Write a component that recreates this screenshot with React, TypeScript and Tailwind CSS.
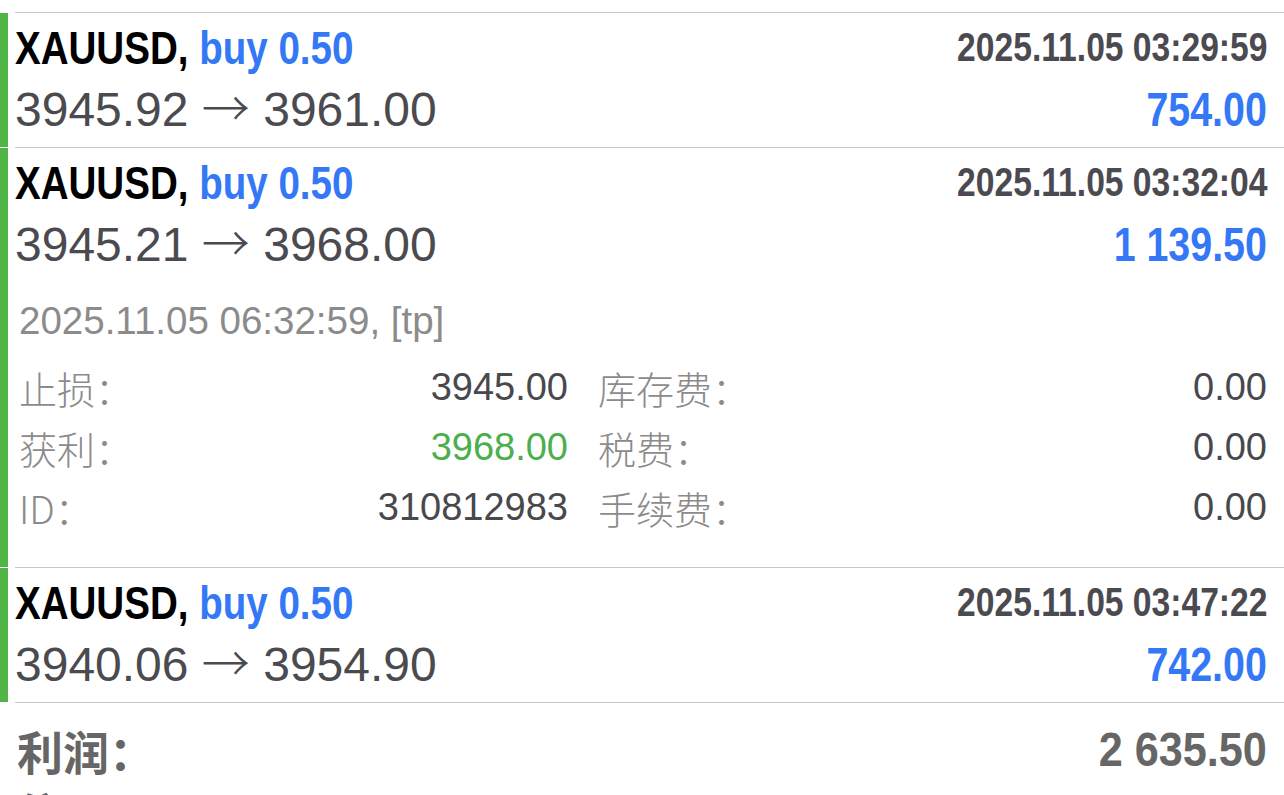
import React from 'react';

// iOS-style condensed bold: Liberation Sans Bold squeezed horizontally
const condensed = "inline-block font-['Liberation_Sans',sans-serif] font-bold scale-x-[0.82]";
const regular = "font-['Liberation_Sans','Noto_Sans_CJK_SC',sans-serif]";
const cjk = "font-['Noto_Sans_CJK_SC','Liberation_Sans',sans-serif]";

interface Deal {
  symbol: string;
  side: string;
  open: string;
  close: string;
  time: string;
  profit: string;
  expanded?: boolean;
}

const deals: Deal[] = [
  { symbol: 'XAUUSD,', side: 'buy 0.50', open: '3945.92', close: '3961.00', time: '2025.11.05 03:29:59', profit: '754.00' },
  { symbol: 'XAUUSD,', side: 'buy 0.50', open: '3945.21', close: '3968.00', time: '2025.11.05 03:32:04', profit: '1 139.50', expanded: true },
  { symbol: 'XAUUSD,', side: 'buy 0.50', open: '3940.06', close: '3954.90', time: '2025.11.05 03:47:22', profit: '742.00' },
];

const DetailCell = ({ label, value, valueClass }: { label: string; value: string; valueClass?: string }) => (
  <div className="flex h-[60px] items-center justify-between pb-[3px]">
    <span className={`${cjk} text-[38px] font-light text-[#8b8b8b]`}>{label}</span>
    <span className={`${regular} text-[38px] ${valueClass ?? 'text-[#48484d]'}`}>{value}</span>
  </div>
);

const DealRow = ({ deal }: { deal: Deal }) => (
  <div className="flex">
    {/* green stripe on the left */}
    <div className="w-[8px] shrink-0 border-b border-white bg-[#50b545]" />
    <div className="ml-[7px] flex-1 border-b border-[#c8c8cc] pr-[17px]">
      <div className={deal.expanded ? 'pt-[6px]' : 'pt-[6px] pb-[9px]'}>
        <div className="flex h-[56px] items-center justify-between">
          <div className="text-[47px] leading-none">
            <span className={`${condensed} origin-left`}>
              <span className="text-black">{deal.symbol}</span>{' '}
              <span className="text-[#3478f6]">{deal.side}</span>
            </span>
          </div>
          <div className={`${condensed} origin-right text-[41px] leading-none text-[#4a4a50]`}>{deal.time}</div>
        </div>
        <div className="mt-[7px] flex h-[56px] items-center justify-between">
          <div className={`${regular} pb-[5px] text-[48px] leading-none text-[#4a4a4f]`}>
            {deal.open} <span className="font-['Noto_Sans_CJK_SC'] font-light">→</span> {deal.close}
          </div>
          <div className={`${condensed} origin-right text-[48px] leading-none text-[#3478f6]`}>{deal.profit}</div>
        </div>
      </div>

      {deal.expanded && (
        <div className="pl-[4px] pt-[24px] pb-[28px]">
          <div className={`${regular} flex h-[48px] items-center text-[38.5px] text-[#8b8b8b]`}>
            2025.11.05 06:32:59, [tp]
          </div>
          <div className="mt-[14px] grid grid-cols-[549px_1fr] gap-x-[30px]">
            <DetailCell label="止损：" value="3945.00" />
            <DetailCell label="库存费：" value="0.00" />
            <DetailCell label="获利：" value="3968.00" valueClass="text-[#4cae4c]" />
            <DetailCell label="税费：" value="0.00" />
            <DetailCell label="ID：" value="310812983" />
            <DetailCell label="手续费：" value="0.00" />
          </div>
        </div>
      )}
    </div>
  </div>
);

export default function App() {
  return (
    <div className="h-[795px] w-[1284px] overflow-hidden bg-white">
      <div className="pt-[12px]">
        <div className="ml-[15px] border-t border-[#c8c8cc]" />
        {deals.map((d, i) => (
          <DealRow key={i} deal={d} />
        ))}
        {/* totals */}
        <div className="pl-[17px] pr-[17px] pt-[16px]">
          <div className="flex h-[62px] items-center justify-between text-[#666666]">
            <span className={`${cjk} text-[46px] font-bold`}>利润：</span>
            <span className="inline-block origin-right scale-x-[0.9] font-['Liberation_Sans',sans-serif] text-[48px] font-bold leading-none">
              2 635.50
            </span>
          </div>
          <div className="flex h-[62px] items-center justify-between text-[#666666]">
            <span className={`${cjk} text-[46px] font-bold`}>信用：</span>
          </div>
        </div>
      </div>
    </div>
  );
}
